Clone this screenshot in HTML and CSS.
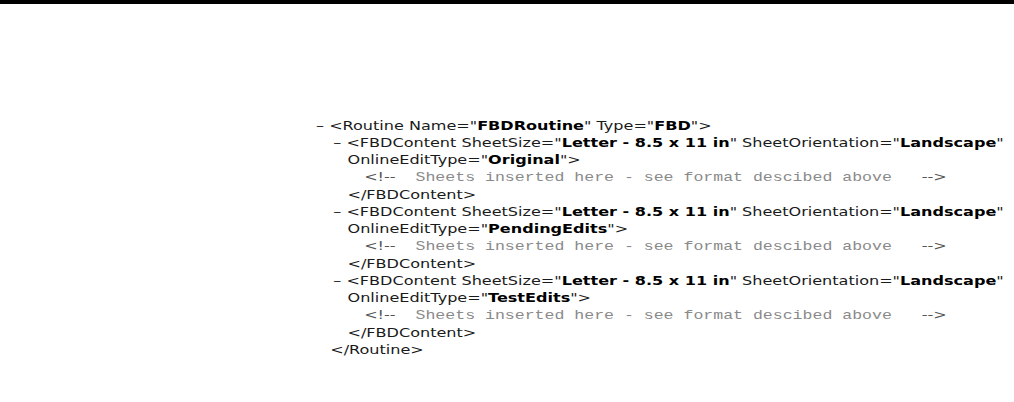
FILE: index.html
```html
<!DOCTYPE html>
<html>
<head>
<meta charset="utf-8">
<link rel="stylesheet" href="styles.css">
</head>
<body>
<div class="topbar"></div>
<div class="doc">
  <div class="tree">
    <div class="el">
      <div class="open"><span class="dash">–</span> &lt;Routine Name="<b>FBDRoutine</b>" Type="<b>FBD</b>"&gt;</div>
      <div class="kids">
        <div class="el">
          <div class="open"><span class="dash">–</span> &lt;FBDContent SheetSize="<b>Letter - 8.5 x 11 in</b>" SheetOrientation="<b>Landscape</b>" OnlineEditType="<b>Original</b>"&gt;</div>
          <div class="kids">
            <div class="cmt"><span class="cm">&lt;!--</span><span class="ct">  Sheets inserted here - see format descibed above   </span><span class="cm">--&gt;</span></div>
          </div>
          <div class="close">&lt;/FBDContent&gt;</div>
        </div>
        <div class="el">
          <div class="open"><span class="dash">–</span> &lt;FBDContent SheetSize="<b>Letter - 8.5 x 11 in</b>" SheetOrientation="<b>Landscape</b>" OnlineEditType="<b>PendingEdits</b>"&gt;</div>
          <div class="kids">
            <div class="cmt"><span class="cm">&lt;!--</span><span class="ct">  Sheets inserted here - see format descibed above   </span><span class="cm">--&gt;</span></div>
          </div>
          <div class="close">&lt;/FBDContent&gt;</div>
        </div>
        <div class="el">
          <div class="open"><span class="dash">–</span> &lt;FBDContent SheetSize="<b>Letter - 8.5 x 11 in</b>" SheetOrientation="<b>Landscape</b>" OnlineEditType="<b>TestEdits</b>"&gt;</div>
          <div class="kids">
            <div class="cmt"><span class="cm">&lt;!--</span><span class="ct">  Sheets inserted here - see format descibed above   </span><span class="cm">--&gt;</span></div>
          </div>
          <div class="close">&lt;/FBDContent&gt;</div>
        </div>
      </div>
      <div class="close">&lt;/Routine&gt;</div>
    </div>
  </div>
</div>
</body>
</html>
```

FILE: styles.css
```css
html, body {
  margin: 0;
  padding: 0;
  background: #fff;
}
body {
  font-family: "DejaVu Sans", Verdana, sans-serif;
  font-size: 13px;
  line-height: 17px;
  color: #1a1a1a;
}
.topbar {
  height: 4px;
  background: #000;
}
.doc {
  padding: 113px 0 0 316px;
}
.tree {
  width: 565px;
  transform: scaleX(1.235);
  transform-origin: 0 0;
}
.open {
  padding-left: 11.5px;
  text-indent: -11.5px;
}
.open b {
  font-weight: bold;
  color: #000;
}
.close {
  padding-left: 11.5px;
}
.kids {
  padding-left: 14px;
}
.cmt {
  padding-left: 11px;
  white-space: pre;
}
.cm {
  color: #555;
}
.ct {
  font-family: "Liberation Mono", "Courier New", monospace;
  font-size: 13.4px;
  color: #8a8a8a;
}
```
